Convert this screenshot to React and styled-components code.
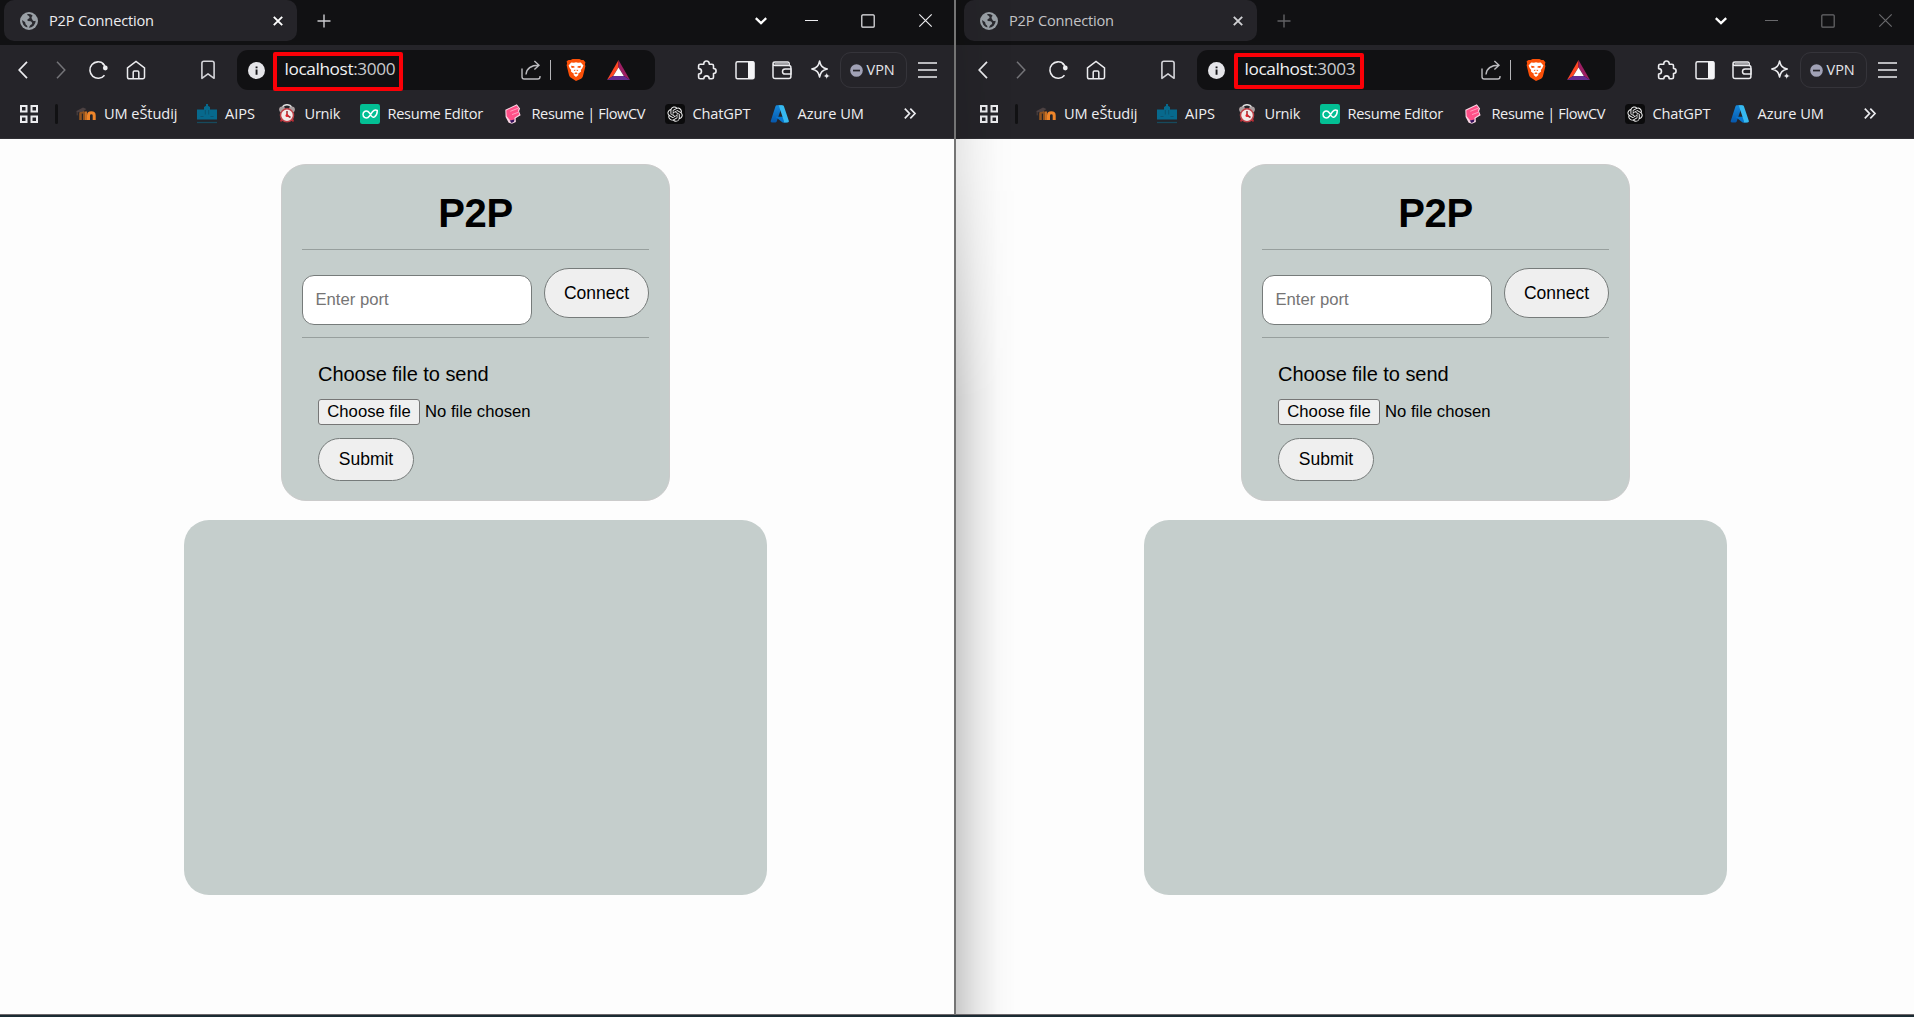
import React from "react";
import styled, { createGlobalStyle } from "styled-components";

const Global = createGlobalStyle`
  * { box-sizing: border-box; }
  body { margin: 0; background: #1b2b33; overflow: hidden; }
`;

const UI = `"Open Sans", "Noto Sans", sans-serif`;
const ARIAL = `"Liberation Sans", Arial, sans-serif`;

const Desktop = styled.div`
  display: flex;
  width: 1914px;
  height: 1017px;
  background: #1b2b33;
`;
const Window = styled.section`
  position: relative;
  display: flex;
  flex-direction: column;
  width: ${(p) => (p.$inactive ? 958 : 956)}px;
  height: 1015px;
  overflow: hidden;
  padding-left: ${(p) => (p.$inactive ? 4 : 0)}px;
  background: linear-gradient(#111113 45px, #252429 45px, #252429 139px, #fdfdfd 139px);
  border-right: ${(p) => (p.$inactive ? "0" : "2px solid #747474")};
  border-bottom: 1px solid #6d686b;
`;
const EdgeShadow = styled.div`
  position: absolute;
  left: 0;
  top: 0;
  bottom: 0;
  width: 60px;
  pointer-events: none;
  background: linear-gradient(90deg, rgba(0, 0, 0, 0.2), rgba(0, 0, 0, 0.09) 35%, rgba(0, 0, 0, 0.02) 70%, transparent);
  mask-image: linear-gradient(rgba(0, 0, 0, 0.3), rgba(0, 0, 0, 0.45) 170px, #000 400px);
`;
const TabStrip = styled.header`
  display: flex;
  flex: none;
  height: 45px;
  padding-left: 4px;
  align-items: flex-start;
`;
const Tab = styled.div`
  display: flex;
  align-items: center;
  width: 293px;
  height: 41px;
  padding: 0 13px 0 16px;
  border-radius: 10px;
  background: #252429;
  color: ${(p) => (p.$inactive ? "#c3c3c6" : "#ededf0")};
`;
const TabTitle = styled.span`
  flex: 1;
  margin-left: 11px;
  padding-bottom: 1px;
  font: 14.6px/20px ${UI};
  letter-spacing: -0.18px;
  white-space: nowrap;
`;
const Slot = styled.span`
  display: flex;
  flex: none;
  align-items: center;
  justify-content: center;
  width: ${(p) => p.$w}px;
  height: ${(p) => p.$h || 20}px;
  margin-left: ${(p) => p.$gap || 0}px;
  color: ${(p) => p.$color || "#ececef"};
  svg { display: block; overflow: visible; }
`;
const StripSlot = styled(Slot)`
  height: 41px;
`;
const Toolbar = styled.nav`
  display: flex;
  flex: none;
  align-items: center;
  height: 50px;
  padding-left: 13px;
`;
const Address = styled.div`
  display: flex;
  align-items: center;
  width: 418px;
  height: 40px;
  margin-left: 22px;
  padding-left: 11px;
  border-radius: 11px;
  background: #111113;
`;
const UrlMark = styled.div`
  display: flex;
  align-items: center;
  flex: none;
  width: 130px;
  height: ${(p) => (p.$inactive ? 36 : 39)}px;
  margin: ${(p) => (p.$inactive ? "2px -1px 0 9px" : "2px 0 0 8px")};
  padding: ${(p) => (p.$inactive ? "0 0 4px 6.5px" : "0 0 4px 7.5px")};
  border: 4px solid #fb0007;
  border-radius: 2px;
  color: #c9c9cc;
  font: 17.2px/22px ${UI};
  letter-spacing: -0.37px;
  white-space: nowrap;
  b { font-weight: 400; color: #f2f2f4; }
`;
const Divider = styled.span`
  width: 1px;
  height: 20px;
  margin-left: 9px;
  background: #b5b5b8;
`;
const Vpn = styled.div`
  display: flex;
  align-items: center;
  width: 67px;
  height: 36px;
  margin-left: 9px;
  padding-left: 9px;
  border: 1px solid #35343a;
  border-radius: 11px;
  color: #e6e6ea;
  font: 14.5px/20px ${UI};
  letter-spacing: 0;
  span { margin-left: 4px; }
`;
const Bookmarks = styled.nav`
  display: flex;
  flex: none;
  align-items: center;
  height: 44px;
  padding: 0 0 6px 19px;
  border-bottom: 1px solid #302f34;
`;
const Bar = styled.span`
  width: 3px;
  height: 20px;
  margin: 0 18px 0 17px;
  border-radius: 2px;
  background: #111113;
`;
const Bookmark = styled.div`
  display: flex;
  align-items: center;
  flex: none;
  width: ${(p) => p.$w}px;
  color: #eeeef0;
  font: 14.6px/20px ${UI};
  letter-spacing: ${(p) => p.$track}px;
  white-space: nowrap;
  svg { flex: none; margin-right: 8px; }
  span { padding-bottom: 1px; }
`;
const Page = styled.main`
  display: flex;
  flex-direction: column;
  align-items: center;
  width: 951px;
  padding-top: 25px;
  font-family: ${ARIAL};
  color: #000;
`;
const Card = styled.section`
  width: 389px;
  height: 337px;
  padding: 20px;
  border: 1px solid #cbcbcb;
  border-radius: 25px;
  background: #c5cecc;
`;
const Title = styled.h1`
  height: 64px;
  margin: 0;
  font-size: 40px;
  line-height: 56px;
  letter-spacing: -0.3px;
  text-align: center;
`;
const Rule = styled.hr`
  height: 1px;
  margin: 0;
  border: 0;
  background: #979f9d;
`;
const PortRow = styled.form`
  display: flex;
  align-items: flex-start;
  height: 87px;
  padding-top: 18px;
`;
const PortInput = styled.input`
  width: 230px;
  height: 50px;
  margin: 7px 12px 0 0;
  padding: 0 12.5px;
  border: 1px solid #767b7a;
  border-radius: 12px;
  background: #fff;
  font: 16.67px ${ARIAL};
  &::placeholder { color: #757575; }
`;
const Pill = styled.button`
  width: ${(p) => p.$w}px;
  height: ${(p) => p.$h}px;
  padding: 0;
  border: 1px solid #767b7a;
  border-radius: 25px;
  background: #efefef;
  color: #000;
  font: 17.5px ${ARIAL};
`;
const FileForm = styled.form`
  display: flex;
  flex-direction: column;
  align-items: flex-start;
  padding: 24px 0 0 16px;
`;
const FileLabel = styled.label`
  height: 37px;
  font-size: 20px;
  line-height: 24px;
  letter-spacing: -0.03px;
`;
const FileRow = styled.div`
  display: flex;
  align-items: center;
  gap: 5px;
  margin-bottom: 13px;
  font-size: 16.67px;
`;
const FileButton = styled.button`
  width: 102px;
  height: 26px;
  padding: 0;
  border: 1px solid #767676;
  border-radius: 3px;
  background: #efefef;
  color: #000;
  font: 16.67px ${ARIAL};
`;
const Messages = styled.section`
  width: 583px;
  height: 375px;
  margin-top: 19px;
  border-radius: 25px;
  background: #c5cecc;
`;

const Svg = ({ w = 20, h = w, vb, children, sw = 1.5, ...rest }) => (
  <svg width={w} height={h} viewBox={vb || `0 0 ${w} ${h}`} fill="none" stroke="currentColor" strokeWidth={sw} {...rest}>
    {children}
  </svg>
);

const Globe = () => (
  <Svg w={18} stroke="none">
    <circle cx="9" cy="9" r="9" fill="#9aa0a6" />
    <path d="M7 2.2C7.500 4 9.600 3.500 9.600 5.500 9.600 7 7.300 6.600 7.300 8.300c0 1.200 3.200.6 4.300 1.700 1.300 1.200.2 2.500-1 3.100-1 .5-1 1.700-1.800 2.600A7 7 0 0 0 15.700 8.800c-1.400.5-2.900.2-3.300-1-.4-1.300-1.100-1.100-.8-2.500.1-.8 1-1 .8-2.100A6.800 6.800 0 0 0 7 2.200ZM2.200 8A7 7 0 0 0 7.300 15.600c.4-1.500-.2-2.200-1.300-2.900-.9-.6-.2-2-1.300-2.900C3.900 9.200 3 9 2.200 8Z" fill="#2b2b30" />
  </Svg>
);
const Close = () => <Svg w={10} sw={1.9}><path d="m.8.8 8.400 8.400m0-8.400L.8 9.200" /></Svg>;
const Plus = () => <Svg w={14} sw={1.4}><path d="M7 .5v13M.5 7h13" /></Svg>;
const Chevron = () => <Svg w={12} h={8} sw={2.3}><path d="m.8 1.200 5.200 5 5.200-5" /></Svg>;
const Minimise = () => <Svg w={13} h={2} sw={1}><path d="M0 .5h13" /></Svg>;
const Maximise = () => <Svg w={14} sw={1.2}><rect x=".8" y=".8" width="12.400" height="12.400" rx="1" /></Svg>;
const WinClose = () => <Svg w={13} sw={1.2}><path d="m.3.3 12.400 12.400m0-12.400L.3 12.700" /></Svg>;
const Back = () => <Svg w={10} h={18} sw={1.7}><path d="M9 .8 1.200 9 9 17.200" /></Svg>;
const Forward = () => <Svg w={10} h={18} sw={1.5}><path d="m1 .8 7.800 8.200L1 17.200" /></Svg>;
const Reload = () => (
  <Svg w={20} sw={1.6}><path d="M15.700 4A8.200 8.200 0 1 0 16.500 15.200" /><circle cx="17.300" cy="8" r="2.400" fill="currentColor" stroke="none" /><path d="M14.300 3.300c1.300.8 2.400 2.200 3 4" /></Svg>
);
const Home = () => (
  <Svg w={20}><path d="M1.500 7.800 10 1.400l8.500 6.400v9.200a1.800 1.800 0 0 1-1.800 1.800H3.300A1.800 1.800 0 0 1 1.500 17ZM7.200 18.500v-6.300c0-.8.4-1.300 1.200-1.300h3.200c.8 0 1.200.5 1.200 1.300v6.300" /></Svg>
);
const Save = () => <Svg w={14} h={20} sw={1.600}><path d="M.9 3.300A2 2 0 0 1 2.900 1.300h8.200a2 2 0 0 1 2 2v15L7 13.900.9 18.300Z" strokeLinejoin="round" /></Svg>;
const Info = () => <Svg w={17} stroke="none"><circle cx="8.500" cy="8.500" r="8.500" fill="#e5e5e9" /><path d="M7.600 4.400h1.900v1.900H7.600ZM7.600 7.500h1.900v5.200H7.600Z" fill="#17171a" /></Svg>;
const Share = () => <Svg w={20} sw={1.400}><path d="M1 8.500v8.300A2.200 2.200 0 0 0 3.200 19h13.600a2.200 2.200 0 0 0 2.200-2.200V16M5 14.500C5.500 8.500 9 5.200 18 5.200M13.400 1l4.600 4.200-4.600 4.200" /></Svg>;
const Brave = () => (
  <Svg w={20} h={22} stroke="none">
    <path d="m4.600 1 2-1h6.800l2 1.100 2-.1 2 2.300-.5 2.300.5 1.700-2.400 9.600c-.4 1.400-1.200 2.200-2.400 3L10 22l-4.600-3.100C4.200 18.100 3.400 17.300 3 15.900L.6 6.300l.5-1.700-.5-2.300L2.600 1Z" fill="#fb5008" />
    <path d="M5.200 3.400 8 3.700l2-.5 2 .5 2.800-.3 2.600 3.200-1.200 2.600-1.400 1.700.3 1.700-3 2.200.3 1.300L10 18l-2.400-1.900.3-1.300-3-2.200.3-1.700-1.400-1.700-1.200-2.600Z" fill="#fff" />
    <path d="m5 6.800 3.300.5.300 1.300-2.900.3ZM15 6.800l-3.300.5-.3 1.300 2.900.3ZM8.500 10.800h.9l-.2 1.200-1.500-.300ZM11.500 10.800h-.9l.2 1.200 1.500-.300ZM8.200 14.200 10 13.300l1.800.9L10 15.300Z" fill="#fb5008" />
  </Svg>
);
const Bat = () => (
  <Svg w={23} h={20} stroke="none"><path d="M11.500 0 0 20l6-4 5.500-8.500Z" fill="#ff4724" /><path d="M11.500 0 23 20l-6-4-5.500-8.500Z" fill="#9e1f63" /><path d="M0 20h23l-6-4H6Z" fill="#662d91" /><path d="m11.500 7.500 5.300 8.500H6.200Z" fill="#fff" /></Svg>
);
const Puzzle = () => (
  <Svg w={20} sw={1.600}><path d="M3.200 4.200h3.600C6.600 2.300 7.800 1 9.500 1s2.900 1.300 2.700 3.200h2.700c1 0 1.600.6 1.600 1.600v2.700c1.600 0 2.600 1 2.600 2.500s-1 2.500-2.600 2.500v3.700c0 1-.6 1.600-1.600 1.600h-2.700c0-1.900-1-2.900-2.700-2.900s-2.600 1-2.700 2.900H3.200c-1 0-1.600-.6-1.600-1.600V14c1.900 0 2.900-1.200 2.900-2.700S3.500 8.600 1.600 8.600V5.800c0-1 .6-1.600 1.600-1.600Z" strokeLinejoin="round" /></Svg>
);
const Sidebar = () => <Svg w={20}><rect x="1" y="1.700" width="18" height="17" rx="1.500" /><path d="M13 1.500h5.500l.8.800v15.700l-.8.800H13Z" fill="#f4f4f6" stroke="none" /></Svg>;
const Wallet = () => (
  <Svg w={20}><path d="M17.200 5.300V3.600c0-1-.6-1.600-1.600-1.600H3C1.800 2 1 2.700 1 3.700s.8 1.700 2 1.700h13.900c1.200 0 2 .8 2 2v9.100c0 1.200-.8 2-2 2H3.200c-1.300 0-2.200-.8-2.200-2.200V4" /><path d="M18.900 8.900h-5.800a2.600 2.600 0 0 0 0 5.200h5.800Z" fill="#252429" /><path d="M2.500 3h14v2h-14z" fill="#a0a0a4" stroke="none" /></Svg>
);
const Sparkle = () => (
  <Svg w={20}><path d="M8.600 1c1 4.900 2.600 6.800 7.700 8-5.100 1.200-6.700 3.100-7.700 8-1-4.900-2.700-6.800-7.800-8 5.100-1.200 6.800-3.100 7.800-8Z" strokeLinejoin="round" /><path d="M15.700 12.600c.5 2.100 1.200 2.900 3.400 3.400-2.200.5-2.900 1.300-3.400 3.400-.5-2.100-1.200-2.900-3.400-3.400 2.200-.5 2.900-1.300 3.400-3.400Z" fill="currentColor" stroke="#252429" strokeWidth=".4" /></Svg>
);
const VpnDot = () => <Svg w={13} stroke="none"><circle cx="6.500" cy="6.500" r="6.300" fill="#a0a1b5" /><path d="M3 5.700h7v1.700H3z" fill="#252429" /></Svg>;
const Menu = () => <Svg w={19} h={16} sw={1.5}><path d="M0 1h19M0 8h19M0 15h19" /></Svg>;
const Apps = () => <Svg w={18} sw={2}><path d="M1 1h5.500v5.500H1ZM11.500 1H17v5.500h-5.500ZM1 11.500h5.500V17H1ZM11.500 11.500H17V17h-5.500Z" /></Svg>;
const More = () => <Svg w={12} h={11} sw={1.7}><path d="m.8.7 4.700 4.800-4.700 4.800M6.300.7 11 5.500l-4.700 4.800" /></Svg>;

const Moodle = () => (
  <Svg w={20}>
    <path d="M4.500 16V9.500C4.500 7.600 8.300 7.600 8.300 10v6" stroke="#8f5320" strokeWidth="2.600" />
    <path d="M12.500 16v-4.500c0-3.600 5.700-3.600 5.700 0V16" stroke="#f0862a" strokeWidth="3" />
    <path d="M10 7.500V16" stroke="#d97722" strokeWidth="1.800" />
    <path d="M0 7.200 7 3.600l3.400 1.500-3.700 2.600-4.500.6Z" fill="#4c4142" stroke="none" />
    <path d="M1.200 7.400v4" stroke="#5d4a47" strokeWidth=".8" />
  </Svg>
);
const Aips = () => (
  <Svg w={20} stroke="none"><path d="M0 5.500h7V3l2-1.200V0h2v1.800L13 3v2.500h7V15.500H0Z" fill="#07698d" /><path d="M8.300 6v4.500m3.400-4.500v4.500M3.500 12.500h3m7 0h3" stroke="#0c5471" strokeWidth="1" /><path d="M0 18.500h20" stroke="#174a5d" strokeWidth="1.300" /></Svg>
);
const Alarm = () => (
  <Svg w={20} stroke="none"><path d="M5.500 3c2-3 7-3 9 0" stroke="#ddd" strokeWidth="1.600" /><circle cx="5.200" cy="5.500" r="3.100" fill="#a99fa0" /><circle cx="14.800" cy="5.500" r="3.100" fill="#a99fa0" /><path d="m4.800 15-1 2.500m11.400-2.500 1 2.500" stroke="#b92a32" strokeWidth="2" /><circle cx="10" cy="11.300" r="6.500" fill="#f2eaea" stroke="#bd4047" strokeWidth="1.500" /><path d="M10 7v4.300l3.500 2.200" stroke="#a33339" strokeWidth="1.600" /><circle cx="10" cy="11.600" r="1.500" fill="#e8202a" /></Svg>
);
const Editor = () => <Svg w={20} stroke="none"><rect width="20" height="20" rx="2.200" fill="#03bf94" /><path d="M17.300 6.500c-1.700-.9-3.600-.3-5 1.500l-2.800 4c-1.300 1.800-3 2.300-4.700 1.500-2.500-1.300-2.400-5.200.2-6.300 1.700-.7 3.300 0 4.500 1.800l1.500 2.400c1.200 1.800 2.500 2.300 3.800 1.300 1.600-1.300 2.500-3.600 2.500-6.200Z" stroke="#fff" strokeWidth="1.500" strokeLinejoin="round" /></Svg>;
const Flow = () => (
  <Svg w={20} stroke="none"><path d="M1.300 5.800 12.800.2l3.300 4.300-1 2.700 1.500 4-4.900 3.100.2 3.600-3.900 1.900-3.300-1L1.600 13Z" fill="#f8d4e2" /><path d="M2.300 6.400 12.600 1.400l2.200 3.200-.8 2.200 1.300 3.800-4.800 3.200-.1 2.200-4.400.2L2.700 12.300Z" fill="#ff5088" /><path d="m6.300 7.300 7.700-3M8 10.600l6-2.200" stroke="#ffc4d7" strokeWidth=".7" /><path d="m5.700 16.500 4.800-1-.6 2.300-2.400 1.100Z" fill="#38105d" /></Svg>
);
const Gpt = () => (
  <Svg w={20} stroke="none">
    <rect width="20" height="20" rx="3.500" fill="#0b0b0c" />
    <g transform="translate(2.400 2.400) scale(.64)" fill="#f0f0f0"><path d="M22.280 9.820a5.980 5.980 0 0 0-.52-4.910 6.050 6.050 0 0 0-6.510-2.900A6.070 6.070 0 0 0 4.980 4.180a5.980 5.980 0 0 0-4 2.900 6.050 6.050 0 0 0 .74 7.100 5.980 5.980 0 0 0 .51 4.910 6.050 6.050 0 0 0 6.510 2.900A5.980 5.980 0 0 0 13.260 24a6.060 6.060 0 0 0 5.770-4.210 5.990 5.990 0 0 0 4-2.900 6.060 6.060 0 0 0-.75-7.070zm-9.020 12.610a4.480 4.480 0 0 1-2.880-1.040l.14-.08 4.780-2.760a.8.8 0 0 0 .39-.68v-6.740l2.020 1.170a.07.07 0 0 1 .04.05v5.580a4.500 4.500 0 0 1-4.490 4.500zM3.600 18.300a4.470 4.470 0 0 1-.54-3.010l.14.08 4.780 2.760a.77.77 0 0 0 .78 0l5.840-3.370v2.330a.08.08 0 0 1-.03.06L9.740 19.950A4.500 4.500 0 0 1 3.600 18.300zM2.340 7.900a4.480 4.480 0 0 1 2.370-1.980V11.600a.77.77 0 0 0 .39.68l5.810 3.350-2.020 1.170a.08.08 0 0 1-.07 0L4 14.010A4.500 4.500 0 0 1 2.340 7.870zm16.600 3.860L13.100 8.360 15.120 7.200a.08.08 0 0 1 .07 0l4.830 2.790a4.490 4.490 0 0 1-.68 8.100v-5.680a.79.79 0 0 0-.4-.66zm2.010-3.020-.14-.09-4.770-2.780a.78.78 0 0 0-.79 0L9.410 9.230V6.900a.07.07 0 0 1 .03-.06l4.830-2.790a4.500 4.500 0 0 1 6.680 4.660zM8.300 12.860 6.290 11.700a.08.08 0 0 1-.04-.06V6.070a4.500 4.500 0 0 1 7.370-3.450l-.14.08L8.700 5.460a.8.8 0 0 0-.39.680zm1.100-2.370L12 9l2.600 1.500v3L12 15l-2.600-1.500z" /></g>
  </Svg>
);
const Azure = () => (
  <Svg w={20} stroke="none">
    <defs><linearGradient id="azureLeft" x1="0" y1="0" x2="0" y2="1"><stop stopColor="#1689dc" /><stop offset="1" stopColor="#0757aa" /></linearGradient></defs>
    <path d="M6.800 1.300h5.500L6.700 17.500c-.2.600-.7 1-1.400 1H2c-1 0-1.500-.8-1.200-1.700L5.500 2.300c.2-.6.700-1 1.300-1Z" fill="url(#azureLeft)" />
    <path d="M5.400 12.700h9l2.500 5.800h-4.300Z" fill="#0877cf" />
    <path d="M8 1.300h4.500c.7 0 1.200.4 1.400 1l4.900 14.500c.3 1-.3 1.700-1.200 1.700h-4.700c.8 0 1.300-.8 1-1.600L9 2.300c-.2-.6-.4-.8-1-1Z" fill="#36b9ef" />
  </Svg>
);

const BOOKMARKS = [
  { text: "UM eŠtudij", Icon: Moodle, w: 121, track: -0.08 },
  { text: "AIPS", Icon: Aips, w: 79.5, track: 0 },
  { text: "Urnik", Icon: Alarm, w: 83, track: -0.25 },
  { text: "Resume Editor", Icon: Editor, w: 144, track: -0.3 },
  { text: "Resume | FlowCV", Icon: Flow, w: 161, track: -0.4 },
  { text: "ChatGPT", Icon: Gpt, w: 105, track: -0.15 },
  { text: "Azure UM", Icon: Azure, w: 134, track: -0.05 },
];

function BrowserWindow({ port, inactive }) {
  const dim = inactive ? "#69696c" : "#ececef";
  return (
    <Window $inactive={inactive}>
      <TabStrip>
        <Tab $inactive={inactive}>
          <Globe />
          <TabTitle>P2P Connection</TabTitle>
          <Slot $w={12} $color={inactive ? "#d0d0d3" : "#fff"}><Close /></Slot>
        </Tab>
        <StripSlot $w={14} $gap={20} $color={inactive ? "#626265" : "#ccccd0"}><Plus /></StripSlot>
        <StripSlot $w={12} $gap={424} $color="#fff"><Chevron /></StripSlot>
        <StripSlot $w={13} $gap={38} $color={dim}><Minimise /></StripSlot>
        <StripSlot $w={14} $gap={43} $color={dim}><Maximise /></StripSlot>
        <StripSlot $w={13} $gap={44} $color={dim}><WinClose /></StripSlot>
      </TabStrip>
      <Toolbar>
        <Slot $w={10} $gap={5}><Back /></Slot>
        <Slot $w={10} $gap={28} $color="#747478"><Forward /></Slot>
        <Slot $w={20} $gap={22}><Reload /></Slot>
        <Slot $w={20} $gap={18}><Home /></Slot>
        <Slot $w={14} $gap={55} $color="#d4d4d8"><Save /></Slot>
        <Address>
          <Slot $w={17}><Info /></Slot>
          <UrlMark $inactive={inactive}><span><b>localhost</b>:{port}</span></UrlMark>
          <Slot $w={20} $gap={118} $color="#bcbcc0"><Share /></Slot>
          <Divider />
          <Slot $w={20} $gap={14.5}><Brave /></Slot>
          <Slot $w={23} $gap={21}><Bat /></Slot>
        </Address>
        <Slot $w={20} $gap={42}><Puzzle /></Slot>
        <Slot $w={20} $gap={18}><Sidebar /></Slot>
        <Slot $w={20} $gap={17}><Wallet /></Slot>
        <Slot $w={20} $gap={18.5}><Sparkle /></Slot>
        <Vpn><VpnDot /><span>VPN</span></Vpn>
        <Slot $w={19} $gap={11}><Menu /></Slot>
      </Toolbar>
      <Bookmarks>
        <Slot $w={19}><Apps /></Slot>
        <Bar />
        {BOOKMARKS.map(({ text, Icon, w, track }) => (
          <Bookmark key={text} $w={w} $track={track}><Icon /><span>{text}</span></Bookmark>
        ))}
        <Slot $w={12}><More /></Slot>
      </Bookmarks>
      <Page>
        <Card>
          <Title>P2P</Title>
          <Rule />
          <PortRow>
            <PortInput placeholder="Enter port" />
            <Pill type="button" $w={105} $h={50}>Connect</Pill>
          </PortRow>
          <Rule />
          <FileForm>
            <FileLabel>Choose file to send</FileLabel>
            <FileRow><FileButton type="button">Choose file</FileButton><span>No file chosen</span></FileRow>
            <Pill type="button" $w={96} $h={43}>Submit</Pill>
          </FileForm>
        </Card>
        <Messages />
      </Page>
      {inactive && <EdgeShadow />}
    </Window>
  );
}

export default function App() {
  return (
    <>
      <Global />
      <Desktop>
        <BrowserWindow port="3000" />
        <BrowserWindow port="3003" inactive />
      </Desktop>
    </>
  );
}
